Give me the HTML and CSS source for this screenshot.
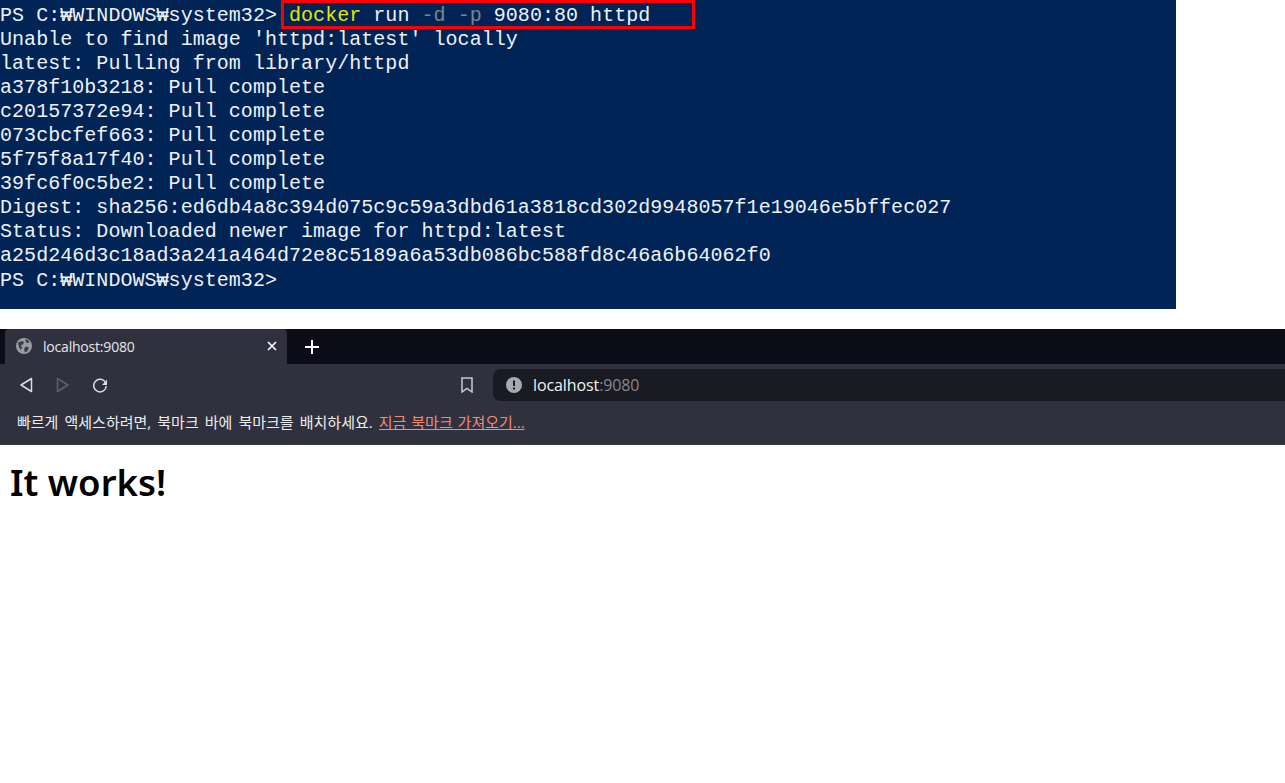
FILE: index.html
```html
<!DOCTYPE html>
<html lang="ko">
<head>
<meta charset="utf-8">
<title>localhost:9080</title>
<link rel="stylesheet" href="styles.css">
</head>
<body>
<section class="terminal">
<div class="line">PS C:₩WINDOWS₩system32&gt; <span class="cmd-box"></span><span class="yellow">docker</span> run <span class="dim">-d -p</span> 9080:80 httpd</div>
<div class="line">Unable to find image 'httpd:latest' locally</div>
<div class="line">latest: Pulling from library/httpd</div>
<div class="line">a378f10b3218: Pull complete</div>
<div class="line">c20157372e94: Pull complete</div>
<div class="line">073cbcfef663: Pull complete</div>
<div class="line">5f75f8a17f40: Pull complete</div>
<div class="line">39fc6f0c5be2: Pull complete</div>
<div class="line">Digest: sha256:ed6db4a8c394d075c9c59a3dbd61a3818cd302d9948057f1e19046e5bffec027</div>
<div class="line">Status: Downloaded newer image for httpd:latest</div>
<div class="line">a25d246d3c18ad3a241a464d72e8c5189a6a53db086bc588fd8c46a6b64062f0</div>
<div class="line">PS C:₩WINDOWS₩system32&gt;</div>
</section>
<section class="browser">
<div class="tabstrip">
<div class="tab">
<svg class="globe" width="16" height="16" viewBox="0 0 16 16"><circle cx="8" cy="8" r="8" fill="#9a9ca3"/><path d="M2 4.500 6 3l2 1-1 2.500-2 .5 1 3-1.500 2L3 9zM9.500 8.500l3.500 1-1.500 3.500-2.500 1.500-1-3z" fill="#3a3c47"/><path d="M9 1.500l3 .5 1.500 2.500-3 .5z" fill="#3a3c47"/></svg>
<span class="tab-title">localhost:9080</span>
<svg class="tab-close" width="10" height="10" viewBox="0 0 10 10"><path d="M1 1l8 8M9 1l-8 8" stroke="#fff" stroke-width="1.600"/></svg>
</div>
<svg class="newtab" width="14" height="14" viewBox="0 0 14 14"><path d="M7 0v14M0 7h14" stroke="#fff" stroke-width="2"/></svg>
</div>
<div class="toolbar">
<svg class="nav" width="14" height="16" viewBox="0 0 14 16"><path d="M12.500 1.500v13L2 8z" fill="none" stroke="#dcdde0" stroke-width="1.500" stroke-linejoin="round"/></svg>
<svg class="nav nav-fwd" width="14" height="16" viewBox="0 0 14 16"><path d="M1.500 1.500v13L12 8z" fill="none" stroke="#5f616b" stroke-width="1.500" stroke-linejoin="round"/></svg>
<svg class="nav nav-reload" width="16" height="16" viewBox="0 0 16 16"><path d="M13.500 5.500A6.300 6.300 0 1 0 14.300 9" fill="none" stroke="#dcdde0" stroke-width="1.500"/><path d="M15 2.500V8H10z" fill="#dcdde0"/></svg>
<svg class="bookmark" width="14" height="16" viewBox="0 0 14 16"><path d="M2 1h10v14l-5-3.500L2 15z" fill="none" stroke="#c9cacf" stroke-width="1.500"/></svg>
<div class="omnibox">
<svg class="info" width="16" height="16" viewBox="0 0 16 16"><circle cx="8" cy="8" r="8" fill="#a8a9ae"/><rect x="7" y="3.500" width="2" height="5.500" fill="#1b1c24"/><rect x="7" y="10.500" width="2" height="2" fill="#1b1c24"/></svg>
<span class="url">localhost<span class="port">:9080</span></span>
</div>
</div>
<div class="bookmarks">빠르게 액세스하려면, 북마크 바에 북마크를 배치하세요.&nbsp;<a class="import" href="#">지금 북마크 가져오기...</a></div>
</section>
<h1 class="heading">It works!</h1>
</body>
</html>
```
FILE: styles.css
```css
* { box-sizing: border-box; }
html, body { margin: 0; padding: 0; background: #fff; }
body { width: 1285px; height: 783px; overflow: hidden; }

.terminal {
  width: 1176px;
  height: 309px;
  background: #012456;
  color: #eef1f5;
  font-family: "Liberation Mono", "DejaVu Sans Mono", "Noto Sans CJK KR", monospace;
  font-size: 20px;
  letter-spacing: 0.04px;
  padding-top: 4px;
  margin-bottom: 20px;
}
.line {
  height: 24.05px;
  line-height: 24px;
  white-space: pre;
  position: relative;
}
.yellow { color: #e6e600; }
.dim { color: #7d8388; }
.cmd-box {
  position: absolute;
  left: 281px;
  top: -4px;
  width: 414px;
  height: 29px;
  border: 3px solid #fb0007;
}

.browser { height: 116px; font-family: "Open Sans", "Noto Sans CJK KR", sans-serif; }

.tabstrip {
  height: 35px;
  background: #0b0c17;
  display: flex;
  align-items: flex-end;
  padding-left: 5px;
}
.tab {
  width: 282px;
  height: 35px;
  background: #2f313e;
  border-radius: 4px 4px 0 0;
  display: flex;
  align-items: center;
  padding: 0 10px 1px 11px;
  color: #e6e7ea;
  font-size: 14px;
}
.globe { margin-right: 11px; flex: none; }
.tab-title { flex: 1; letter-spacing: -0.2px; }
.tab-close { flex: none; }
.newtab { margin: 0 0 10px 18px; }

.toolbar {
  height: 41px;
  background: #2f313e;
  display: flex;
  align-items: center;
  padding-left: 19px;
}
.nav { flex: none; }
.nav-fwd { margin-left: 23px; }
.nav-reload { margin-left: 22px; }
.bookmark { flex: none; margin-left: 352px; }
.omnibox {
  margin-left: 19px;
  flex: 1;
  height: 32px;
  background: #191a22;
  border-radius: 8px 0 0 8px;
  display: flex;
  align-items: center;
  padding-left: 13px;
}
.info { margin-right: 11px; }
.url { color: #f0f1f3; font-size: 16px; letter-spacing: -0.1px; }
.port { color: #85878e; }

.bookmarks {
  height: 40px;
  background: #2f313e;
  border-bottom: 1px solid #3d3f4a;
  color: #eceded;
  font-size: 15px;
  word-spacing: 2.2px;
  line-height: 34px;
  padding-left: 17px;
}
.import { color: #f58a73; text-decoration: underline; word-spacing: 1px; }

.heading {
  margin: 0;
  padding: 14px 0 0 10px;
  font-family: "Noto Sans", "Open Sans", sans-serif;
  font-size: 36.500px;
  line-height: 46px;
  font-weight: 600;
  color: #000;
}
```
